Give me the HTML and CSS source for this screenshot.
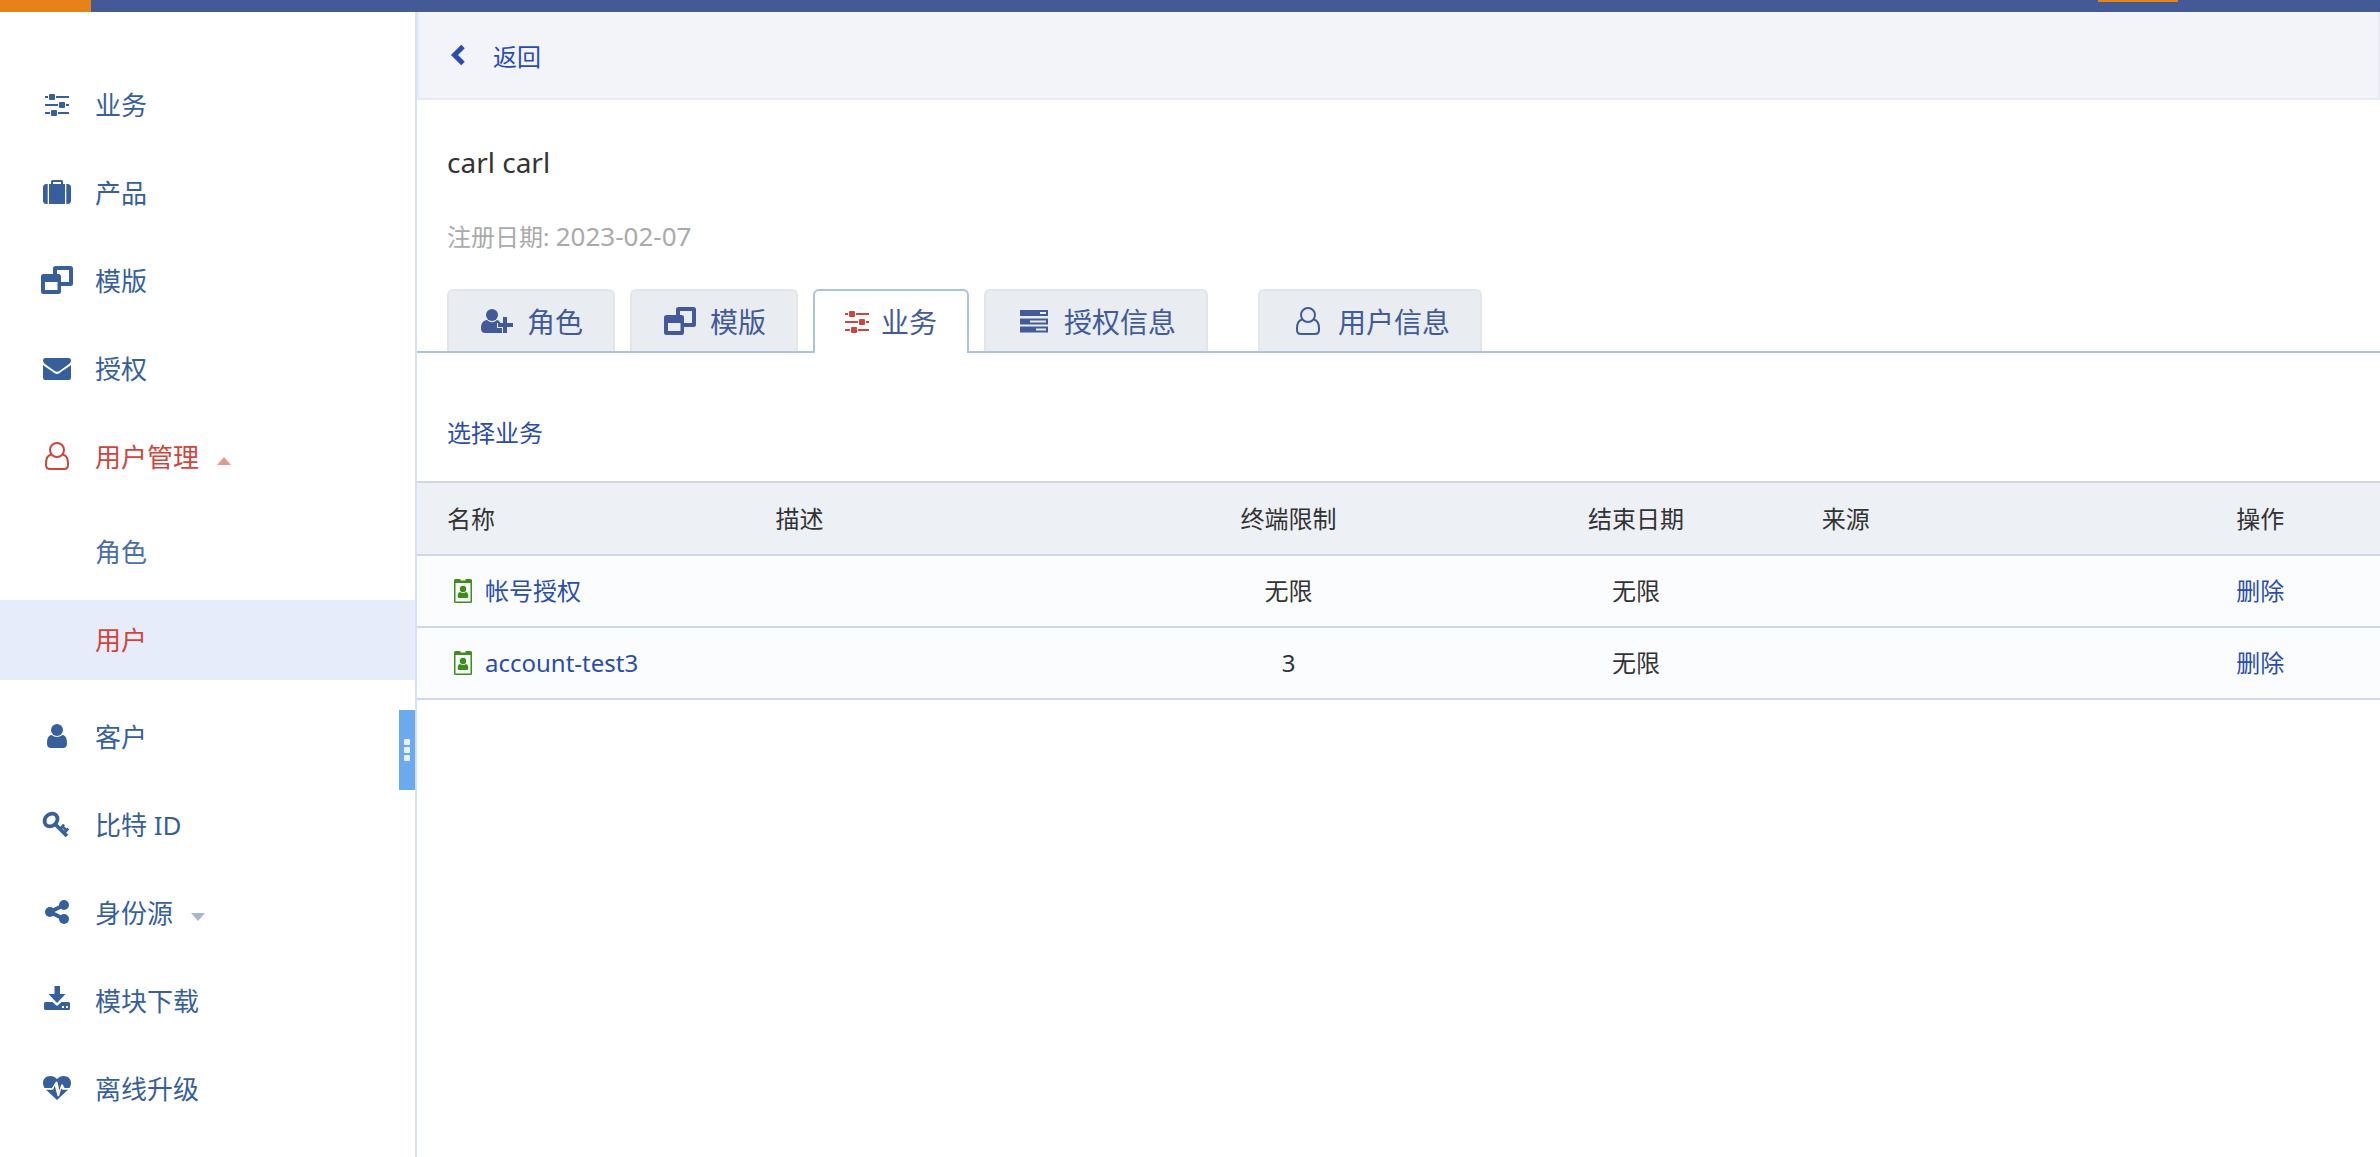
FILE: index.html
```html
<!DOCTYPE html>
<html lang="zh-CN">
<head>
<meta charset="utf-8">
<meta name="viewport" content="width=device-width, initial-scale=1">
<title>用户 - carl carl</title>
<link rel="stylesheet" href="styles.css">
</head>
<body>
<svg class="sprite" aria-hidden="true">
  <symbol id="i-sliders" viewBox="0 0 32 32">
    <path d="M4 7h3v2H4zM15 7h13v2H15zM4 15h13v2H4zM25 15h3v2h-3zM4 23h5v2H4zM17 23h11v2H17z"/>
    <rect x="8" y="5" width="6" height="6" rx="1"/><rect x="18" y="13" width="6" height="6" rx="1"/><rect x="10" y="21" width="6" height="6" rx="1"/>
  </symbol>
  <symbol id="i-suitcase" viewBox="0 0 32 32">
    <path d="M6.700 7V27H5.500A3.500 3.500 0 0 1 2 23.500V10.500a3.500 3.500 0 0 1 3.500-3.500zM25.300 7V27h1.200A3.500 3.500 0 0 0 30 23.500V10.500a3.500 3.500 0 0 0-3.500-3.500zM8 7h2V4.500A1.500 1.500 0 0 1 11.500 3h9A1.500 1.500 0 0 1 22 4.500V7h2v20H8zM12 7h8V5h-8z" fill-rule="evenodd"/>
  </symbol>
  <symbol id="i-windows" viewBox="0 0 32 32">
    <path d="M12 9V3.500A2.500 2.500 0 0 1 14.500 1h15A2.500 2.500 0 0 1 32 3.500v15a2.500 2.500 0 0 1-2.500 2.500H20v-4h8V5H16v4h1.500A2.500 2.500 0 0 1 20 11.500v15a2.500 2.500 0 0 1-2.500 2.500h-15A2.500 2.500 0 0 1 0 26.500v-15A2.500 2.500 0 0 1 2.500 9zM4 17v8h12.500v-8z" fill-rule="evenodd"/>
  </symbol>
  <symbol id="i-envelope" viewBox="0 0 32 32">
    <path d="M2 12c4 3 8 5.500 11.300 8 1.800 1.300 3.600 1.300 5.400 0C22 17.500 26 15 30 12v12.500a2.500 2.500 0 0 1-2.500 2.500h-23A2.500 2.500 0 0 1 2 24.500zM4.500 5h23A2.500 2.500 0 0 1 30 7.500c0 1.600-1 2.800-2.300 3.700l-9 6.500c-2 1.400-3.400 1.400-5.400 0l-9-6.500C3 10.300 2 9 2 7.500A2.500 2.500 0 0 1 4.500 5z"/>
  </symbol>
  <symbol id="i-user-o" viewBox="0 0 32 32">
    <g fill="none" stroke="currentColor" stroke-width="2"><circle cx="16" cy="9" r="7"/><path d="M10 13.500C6.500 14.500 5 18 5 22.500V24c0 2.500 1.500 4 4 4h14c2.500 0 4-1.500 4-4v-1.500c0-4.500-1.500-8-5-9"/></g>
  </symbol>
  <symbol id="i-user" viewBox="0 0 32 32">
    <circle cx="16" cy="9" r="6"/><path d="M10.500 14q5.500 4 11 0c3.500.500 4.500 4 4.500 8.500 0 3-1.500 4.500-4 4.500H10c-2.500 0-4-1.500-4-4.500 0-4.500 1-8 4.500-8.500z"/>
  </symbol>
  <symbol id="i-user-plus" viewBox="0 0 32 32">
    <circle cx="11" cy="9" r="6"/><path d="M6 14q5 4.500 10 0 2 .300 3.200 2.500V17H16v5h5v5H4.500C1.500 27 0 25.500 0 22.500c0-4.500 1.500-8 6-8.500zM22 11h4v6h6v4h-6v6h-4v-6h-5v-4h5z"/>
  </symbol>
  <symbol id="i-key" viewBox="0 0 32 32">
    <g fill="none" stroke="currentColor"><ellipse cx="10" cy="11" rx="7" ry="5.800" transform="rotate(-42 10 11)" stroke-width="3.800"/><path d="M14 15l12 12" stroke-width="3.800"/><path d="M19.500 19.500l3.500-4M23.500 23.500l3.800-4M21.500 17.500l3.500 3.500" stroke-width="2.600"/></g>
  </symbol>
  <symbol id="i-share" viewBox="0 0 32 32">
    <circle cx="9" cy="15" r="5"/><circle cx="23" cy="8" r="5"/><circle cx="23" cy="22" r="5"/><path d="M23 8L9 15l14 7" fill="none" stroke="currentColor" stroke-width="4"/>
  </symbol>
  <symbol id="i-download" viewBox="0 0 32 32">
    <path d="M13.500 1H19v8h5.500L16 18 7.500 9h6z"/><path d="M4.500 17h7l3.500 3.300q1 .800 2 0l3.500-3.300h7a1.500 1.500 0 0 1 1.500 1.500v5a1.500 1.500 0 0 1-1.500 1.500h-23A1.500 1.500 0 0 1 3 23.500v-5A1.500 1.500 0 0 1 4.500 17zM21 21v2h2v-2zM25 21v2h2v-2z" fill-rule="evenodd"/>
  </symbol>
  <symbol id="i-heartbeat" viewBox="0 0 32 32">
    <path d="M16 6C18 4 20 3 22.500 3c4.500 0 7.500 2.800 7.500 7 0 1.800-.500 3.500-1.500 5h-5l-1.600-3.200a1 1 0 0 0-1.800.200l-1.600 5.500-2-8.200a1 1 0 0 0-1.900 0L11 15H3.500C2.500 13.500 2 11.800 2 10c0-4.200 3-7 7.500-7 2.500 0 4.500 1 6.500 3z"/><path d="M5 16.800h6.500a1 1 0 0 0 1-.800l1.200-3.500 2.600 9.700a1 1 0 0 0 2 0l2-7 .7 1.100a1 1 0 0 0 .9.500H27L16 27z"/>
  </symbol>
  <symbol id="i-tasks" viewBox="0 0 32 32">
    <path d="M2 4h28v6H2zM22 6v2h6V6zM2 12.500h28v6H2zM12 14.500v2h16v-2zM2 20.500h28v6H2zM18 22.500v2h10v-2z" fill-rule="evenodd"/>
  </symbol>
  <symbol id="i-back" viewBox="0 0 32 32">
    <path d="M14 5.500L5.500 14l8.500 8.500" fill="none" stroke="currentColor" stroke-width="5"/>
  </symbol>
  <symbol id="i-badge" viewBox="0 0 18 24">
    <path d="M1.500 0h5v1.500h5V0h5A1.500 1.500 0 0 1 18 1.500v21a1.500 1.500 0 0 1-1.500 1.500h-15A1.500 1.500 0 0 1 0 22.500v-21A1.500 1.500 0 0 1 1.500 0zM1.500 4v18.500h15V4z" fill-rule="evenodd"/><circle cx="9" cy="10" r="3.200"/><path d="M6 13q3 2 6 0 2.300.500 2.300 4v.500q0 1.500-1.300 1.500H5q-1.300 0-1.300-1.500V17q0-3.500 2.300-4z"/>
  </symbol>
</svg>

<header class="topbar"><span class="topbar-logo"></span><span class="topbar-current"></span></header>

<div class="layout">
  <nav class="sidebar">
    <ul class="menu">
      <li><a class="menu-link" href="#"><svg class="icon"><use href="#i-sliders"/></svg>业务</a></li>
      <li><a class="menu-link" href="#"><svg class="icon"><use href="#i-suitcase"/></svg>产品</a></li>
      <li><a class="menu-link" href="#"><svg class="icon"><use href="#i-windows"/></svg>模版</a></li>
      <li><a class="menu-link" href="#"><svg class="icon"><use href="#i-envelope"/></svg>授权</a></li>
      <li>
        <a class="menu-link is-open" href="#"><svg class="icon"><use href="#i-user-o"/></svg>用户管理<span class="caret caret-up"></span></a>
        <ul class="submenu">
          <li><a class="submenu-link" href="#">角色</a></li>
          <li><a class="submenu-link is-current" href="#">用户</a></li>
        </ul>
      </li>
      <li><a class="menu-link" href="#"><svg class="icon"><use href="#i-user"/></svg>客户</a></li>
      <li><a class="menu-link" href="#"><svg class="icon"><use href="#i-key"/></svg>比特 ID</a></li>
      <li><a class="menu-link" href="#"><svg class="icon"><use href="#i-share"/></svg>身份源<span class="caret caret-down"></span></a></li>
      <li><a class="menu-link" href="#"><svg class="icon"><use href="#i-download"/></svg>模块下载</a></li>
      <li><a class="menu-link" href="#"><svg class="icon"><use href="#i-heartbeat"/></svg>离线升级</a></li>
    </ul>
    <button class="collapse" type="button" aria-label="收起菜单"><i></i><i></i><i></i></button>
  </nav>

  <main class="content">
    <div class="backbar"><a class="back" href="#"><svg class="icon"><use href="#i-back"/></svg>返回</a></div>
    <h1 class="name">carl carl</h1>
    <p class="registered">注册日期: <time class="date">2023-02-07</time></p>

    <div class="tabs" role="tablist">
      <button class="tab" type="button" role="tab"><svg class="tab-icon"><use href="#i-user-plus"/></svg>角色</button>
      <button class="tab" type="button" role="tab"><svg class="tab-icon"><use href="#i-windows"/></svg>模版</button>
      <button class="tab is-active" type="button" role="tab" aria-selected="true"><svg class="tab-icon"><use href="#i-sliders"/></svg>业务</button>
      <button class="tab" type="button" role="tab"><svg class="tab-icon"><use href="#i-tasks"/></svg>授权信息</button>
      <button class="tab tab-apart" type="button" role="tab"><svg class="tab-icon"><use href="#i-user-o"/></svg>用户信息</button>
    </div>

    <div class="actions"><a href="#">选择业务</a></div>

    <table class="grid">
      <colgroup><col class="c-name"><col class="c-desc"><col class="c-limit"><col class="c-end"><col class="c-source"><col class="c-op"></colgroup>
      <thead>
        <tr><th>名称</th><th>描述</th><th class="center">终端限制</th><th class="center">结束日期</th><th>来源</th><th class="center">操作</th></tr>
      </thead>
      <tbody>
        <tr><td><a class="entry" href="#"><svg class="badge"><use href="#i-badge"/></svg>帐号授权</a></td><td></td><td class="center">无限</td><td class="center">无限</td><td></td><td class="center"><a href="#">删除</a></td></tr>
        <tr><td><a class="entry" href="#"><svg class="badge"><use href="#i-badge"/></svg>account-test3</a></td><td></td><td class="center">3</td><td class="center">无限</td><td></td><td class="center"><a href="#">删除</a></td></tr>
      </tbody>
    </table>
  </main>
</div>
</body>
</html>
```

FILE: styles.css
```css
* { box-sizing: border-box; }

body {
  margin: 0;
  min-height: 100vh;
  display: flex;
  flex-direction: column;
  background: #fff;
  color: #333;
  font: 400 24px/32px "Noto Sans", "Noto Sans CJK SC", sans-serif;
}

ul { margin: 0; padding: 0; list-style: none; }
a { color: #2a4dad; text-decoration: none; }
button { font: inherit; cursor: pointer; }
svg { fill: currentColor; flex: none; }
.sprite { display: none; }

.topbar {
  position: relative;
  display: flex;
  height: 12px;
  background: #435a97;
}
.topbar-logo { width: 91px; background: #e58219; }
.topbar-current {
  position: absolute;
  top: 0;
  right: 202px;
  width: 80px;
  height: 2px;
  background: #e58219;
}

.layout { flex: 1; display: flex; }

.sidebar {
  position: relative;
  flex: none;
  width: 417px;
  padding-top: 53px;
  border-right: 2px solid #d6e0f9;
}
.menu { display: flex; flex-direction: column; gap: 8px; }
.menu-link,
.submenu-link {
  display: flex;
  align-items: center;
  height: 80px;
  color: #375f9b;
  font-size: 26px;
}
.menu-link { padding-left: 41px; }
.icon { width: 32px; height: 32px; }
.menu-link .icon { margin-right: 22px; }
.menu-link.is-open { color: #d0453b; }
.submenu { display: flex; flex-direction: column; gap: 8px; padding: 15px 0 9px; }
.submenu-link { padding-left: 95px; color: #4b6fa5; }
.submenu-link.is-current { background: #e6ecfa; color: #d0453b; }

.caret {
  margin: 8px 0 0 18px;
  border: 7px solid transparent;
  opacity: .55;
}
.caret-up { border-top: 0; border-bottom: 8px solid; }
.caret-down { border-bottom: 0; border-top: 8px solid; opacity: .45; }

.collapse {
  position: absolute;
  top: 698px;
  right: 0;
  width: 16px;
  height: 80px;
  padding: 0;
  border: 0;
  background: #6aaaee;
  display: flex;
  flex-direction: column;
  align-items: center;
  justify-content: center;
  gap: 2px;
}
.collapse i { width: 6px; height: 6px; border-radius: 1px; background: #ebeff8; }

.content { flex: 1; min-width: 0; }

.backbar {
  display: flex;
  height: 88px;
  padding-left: 30px;
  border: 2px solid #e9ebf4;
  border-top: 0;
  background: #f3f4f9;
}
.back { display: flex; align-items: center; gap: 12px; padding-top: 4px; }

.name {
  margin: 42px 30px 0;
  font-size: 28px;
  font-weight: 400;
  line-height: 40px;
}
.registered { margin: 39px 30px 0; color: #aaa; }
.date { font-size: 26px; line-height: 24px; }

.tabs {
  display: flex;
  gap: 15px;
  margin-top: 36px;
  padding-left: 30px;
  border-bottom: 2px solid #a8c4de;
}
.tab {
  display: flex;
  align-items: center;
  gap: 12px;
  height: 62px;
  padding: 2px 30px 0;
  border: 2px solid #e4e5ea;
  border-bottom: 0;
  border-radius: 6px 6px 0 0;
  background: #e9edf2;
  color: #425a97;
  font-size: 28px;
}
.tab-icon { width: 36px; height: 32px; }
.is-active {
  height: 64px;
  margin-bottom: -2px;
  padding-bottom: 2px;
  border-color: #a8c4de;
  background: #fff;
}
.is-active .tab-icon { width: 32px; margin: 0 -4px; color: #d0453b; }
.tab-apart { margin-left: 35px; }

.actions { padding: 64px 30px 32px; }

.grid {
  width: 100%;
  table-layout: fixed;
  border-collapse: collapse;
}
.c-name { width: 17.5%; }
.c-desc { width: 17.9%; }
.c-limit { width: 18%; }
.c-end { width: 17.4%; }
.c-source { width: 17%; }
.c-op { width: 12.2%; }
.grid th,
.grid td {
  height: 72px;
  padding: 0 15px;
  border: solid #d0d7e8;
  border-width: 2px 0;
  font-weight: 400;
  text-align: left;
}
.grid th { height: 73px; background: #edf0f5; }
.grid td { background: #fbfcfe; }
.grid th:first-child,
.grid td:first-child { padding-left: 30px; }
.grid .center { text-align: center; }
.entry { display: flex; align-items: center; gap: 13px; padding-left: 7px; }
.badge { width: 18px; height: 24px; color: #3c8d1c; }
```
